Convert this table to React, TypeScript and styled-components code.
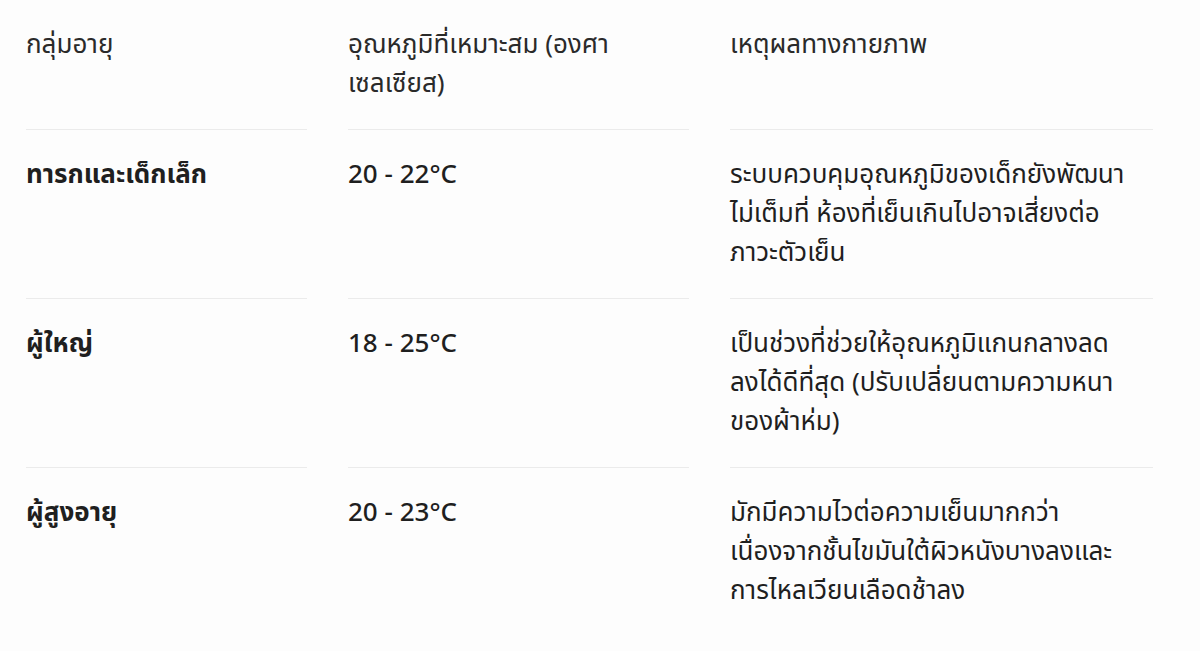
import styled, { createGlobalStyle } from 'styled-components';

const GlobalStyle = createGlobalStyle`
  html, body {
    margin: 0;
    padding: 0;
    background: #fdfdfd;
  }
  body {
    font-family: 'Noto Sans Thai', 'Noto Sans Thai UI', 'Noto Sans', 'DejaVu Sans', sans-serif;
    color: #222222;
  }
`;

type Row = {
  group: string;
  temp: string;
  reason: string[];
};

// line breaks kept as in the design
const rows: Row[] = [
  {
    group: 'ทารกและเด็กเล็ก',
    temp: '20 - 22°C',
    reason: [
      'ระบบควบคุมอุณหภูมิของเด็กยังพัฒนา',
      'ไม่เต็มที่ ห้องที่เย็นเกินไปอาจเสี่ยงต่อ',
      'ภาวะตัวเย็น',
    ],
  },
  {
    group: 'ผู้ใหญ่',
    temp: '18 - 25°C',
    reason: [
      'เป็นช่วงที่ช่วยให้อุณหภูมิแกนกลางลด',
      'ลงได้ดีที่สุด (ปรับเปลี่ยนตามความหนา',
      'ของผ้าห่ม)',
    ],
  },
  {
    group: 'ผู้สูงอายุ',
    temp: '20 - 23°C',
    reason: [
      'มักมีความไวต่อความเย็นมากกว่า',
      'เนื่องจากชั้นไขมันใต้ผิวหนังบางลงและ',
      'การไหลเวียนเลือดช้าลง',
    ],
  },
];

const App = () => {
  return (
    <>
      <GlobalStyle />
      <Table>
        <HeadCell>กลุ่มอายุ</HeadCell>
        <HeadCell>
          <Line>อุณหภูมิที่เหมาะสม (องศา</Line>
          <Line>เซลเซียส)</Line>
        </HeadCell>
        <HeadCell>เหตุผลทางกายภาพ</HeadCell>
        {rows.map((row, i) => {
          const last = i === rows.length - 1;
          return (
            <Row key={row.group}>
              <Cell $weight={700} $last={last}>
                {row.group}
              </Cell>
              <Cell $weight={500} $last={last}>
                {row.temp}
              </Cell>
              <Cell $weight={400} $last={last}>
                {row.reason.map((line) => (
                  <Line key={line}>{line}</Line>
                ))}
              </Cell>
            </Row>
          );
        })}
      </Table>
    </>
  );
};

export default App;

const Table = styled.div`
  display: grid;
  grid-template-columns: 281px 341px 423px;
  column-gap: 41px;
  padding: 0 0 0 26px;
  font-size: 26px;
  line-height: 39px;
`;

const Row = styled.div`
  display: contents;
`;

const HeadCell = styled.div`
  padding: 26px 0 25px;
  border-bottom: 1px solid #ebebeb;
  font-weight: 400;
  color: #2a2a2a;
`;

const Cell = styled.div<{ $weight: number; $last?: boolean }>`
  padding: 26px 0 25px;
  border-bottom: ${(p) => (p.$last ? 'none' : '1px solid #ebebeb')};
  font-weight: ${(p) => p.$weight};
  color: #1f1f1f;
`;

const Line = styled.span`
  display: block;
  white-space: nowrap;
`;
